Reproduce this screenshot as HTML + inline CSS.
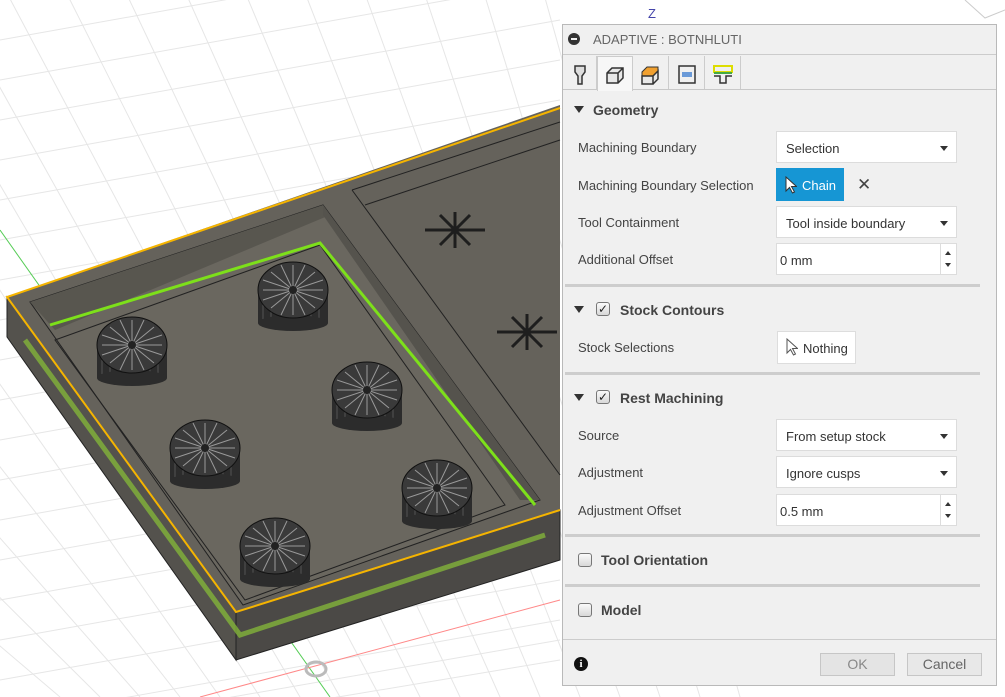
<!DOCTYPE html>
<html><head><meta charset="utf-8"><style>
*{margin:0;padding:0;box-sizing:border-box}
body{width:1005px;height:697px;overflow:hidden;background:#fff;font-family:"Liberation Sans",Arial,sans-serif;position:relative}
#vp{position:absolute;left:0;top:0}
#panel{position:absolute;left:562px;top:24px;width:435px;height:662px;background:#f0f0f0;border:1px solid #b9b9b9}
.t{position:absolute;font-size:13px;color:#444;white-space:nowrap}
.h{position:absolute;font-size:14px;font-weight:bold;color:#444;white-space:nowrap}
.tri{position:absolute;width:0;height:0;border-left:5px solid transparent;border-right:5px solid transparent;border-top:7px solid #333}
.sel{position:absolute;left:213px;width:181px;height:32px;background:#fff;border:1px solid #dcdcdc;font-size:13px;color:#333;padding:9px 0 0 9px}
.sel:after{content:"";position:absolute;right:8px;top:14px;border-left:4px solid transparent;border-right:4px solid transparent;border-top:5px solid #333}
.num{position:absolute;left:213px;width:181px;height:32px;background:#fff;border:1px solid #dcdcdc;font-size:13px;color:#333;padding:9px 0 0 3px}
.spin{position:absolute;right:0;top:0;width:16px;height:30px;border-left:1px solid #ddd}
.spin:before{content:"";position:absolute;left:4px;top:7px;border-left:3px solid transparent;border-right:3px solid transparent;border-bottom:4px solid #333}
.spin:after{content:"";position:absolute;left:4px;top:19px;border-left:3px solid transparent;border-right:3px solid transparent;border-top:4px solid #333}
.sep{position:absolute;left:2px;width:415px;height:3px;background:#cdcdcd}
.cb{position:absolute;width:14px;height:14px;border:1px solid #777;border-radius:3px;background:linear-gradient(#fafafa,#d8d8d8);font-size:12px;line-height:12px;text-align:center;color:#222}
.btn{position:absolute;top:628px;height:23px;border:1px solid #c6c6c6;background:#e4e4e4;font-size:14px;color:#888;text-align:center;line-height:21px}
.tab{position:absolute;top:31px;height:33px;width:36px;border-right:1px solid #ccc}
</style></head><body>
<svg id="vp" width="1005" height="697" viewBox="0 0 1005 697">
<defs>
<g id="fl">
<rect x="-35" y="-5" width="70" height="38" fill="#2c2c2c"/>
<g stroke="#555" stroke-width="1"><path d="M-30 5v30M-22 5v33M-14 5v35M-6 5v36M2 5v36M10 5v35M18 5v33M26 5v30"/></g>
<ellipse cx="0" cy="33" rx="35" ry="8" fill="#2c2c2c"/>
<ellipse cx="0" cy="0" rx="35" ry="28" fill="#3a3a3a" stroke="#111"/>
<g stroke="#999" stroke-width="1"><path d="M-30 0H30M0 -25V25M-22 -18L22 18M22 -18L-22 18M-12 -25L12 25M12 -25L-12 25M-30 -10L30 10M30 -10L-30 10"/></g>
<circle r="4" fill="#222"/>
</g>
</defs>
<g stroke="#e6e6e6" stroke-width="1">
<path d="M0 40 L560 -60 M0 80 L560 -20 M0 120 L560 20 M0 160 L560 60 M0 200 L560 100 M0 240 L560 140 M0 280 L560 180 M0 320 L560 220 M0 360 L560 260 M0 400 L560 300 M0 440 L560 340 M0 480 L560 380 M0 520 L560 420 M0 560 L560 460 M0 600 L560 500 M0 640 L560 540 M0 680 L560 580 M0 720 L560 620 M100 720 L560 640 M200 720 L560 660"/>
<path d="M-200 100 L220 697 M-160 40 L260 697 M-120 -20 L300 697 M-60 -20 L340 697 M0 -20 L380 697 M60 -20 L420 697 M120 -20 L460 697 M180 -20 L500 697 M240 -20 L540 697 M300 -20 L580 697 M360 -20 L620 697 M420 -20 L660 697 M480 -20 L700 697 M540 -20 L740 697 M-240 160 L180 697 M-280 220 L140 697 M-320 280 L100 697 M-360 340 L60 697"/>
</g>
<path d="M0 230 L330 697" stroke="#5c5" stroke-width="1"/>
<path d="M200 697 L560 600" stroke="#f88" stroke-width="1"/>
<polygon points="7,297 7,337 236,660 236,612" fill="#54524d" stroke="#222" stroke-width="1"/>
<polygon points="236,612 560,510 560,560 236,660" fill="#4b4946" stroke="#222" stroke-width="1"/>
<polygon points="7,297 560,105 560,510 236,612" fill="#65625b"/>
<polygon points="30,302 323,205 540,500 243,605" fill="#6a675f" stroke="#222" stroke-width="1"/>
<polygon points="30,302 323,205 330,215 55,330" fill="#58564f"/>
<polygon points="323,205 540,500 520,500 323,215" fill="#55534d"/>
<polygon points="55,340 320,245 505,505 245,600" fill="none" stroke="#222" stroke-width="1"/>
<path d="M352 190 L560 122 M352 190 L560 475 M365 205 L560 140" stroke="#222" stroke-width="1" fill="none"/>
<path d="M50 325 L320 243 L535 505" stroke="#7de01a" stroke-width="3" fill="none"/>
<path d="M25 340 L240 635 L545 535" stroke="#82b43a" stroke-width="5" fill="none" opacity="0.8"/>
<path d="M560 108 L7 297 L236 612 L560 510" stroke="#f5b400" stroke-width="2" fill="none"/>
<use href="#fl" x="132" y="345"/><use href="#fl" x="293" y="290"/><use href="#fl" x="367" y="390"/>
<use href="#fl" x="205" y="448"/><use href="#fl" x="437" y="488"/><use href="#fl" x="275" y="546"/>
<g stroke="#1e1e1e" stroke-width="3" fill="none"><path d="M425 230 H485 M440 215 L470 245 M470 215 L440 245 M455 212 V248"/><path d="M497 332 H557 M512 317 L542 347 M542 317 L512 347 M527 314 V350"/></g>
<ellipse cx="316" cy="669" rx="10" ry="7" fill="none" stroke="#bbb" stroke-width="3"/>
<text x="648" y="18" font-size="13" fill="#44a" font-family="Liberation Sans">Z</text>
<path d="M965 0 L985 18 L1005 10" stroke="#ccc" fill="none"/>
</svg>
<div id="panel">
<div style="position:absolute;left:5px;top:8px;width:12px;height:12px;border-radius:50%;background:#333"></div>
<div style="position:absolute;left:8px;top:13px;width:6px;height:2px;background:#f0f0f0"></div>
<div class="t" style="left:30px;top:7px;color:#666;font-size:13px">ADAPTIVE : BOTNHLUTI</div>
<div style="position:absolute;left:0;top:29px;width:433px;height:1px;background:#ccc"></div>
<div style="position:absolute;left:0;top:64px;width:433px;height:1px;background:#c8c8c8"></div>
<div class="tab" style="left:0;width:34px"><svg width="34" height="33"><path d="M12 10 h10 v6 l-3 4 v8 h-4 v-8 l-3-4z" fill="#ddd" stroke="#333" stroke-width="1.5"/></svg></div>
<div class="tab" style="left:34px;background:#f7f7f7;border:1px solid #ccc;border-bottom:none;height:35px"><svg width="34" height="33"><path d="M9 16 l5-5 h11 v10 l-5 5 h-11z M9 16 h11 v10 M20 16 l5-5" fill="#e8e8e8" stroke="#333" stroke-width="1.5"/></svg></div>
<div class="tab" style="left:70px"><svg width="36" height="33"><path d="M9 16 l5-5 h11 v4 l-5 5 h-11z" fill="#f0a030" stroke="#333" stroke-width="1"/><path d="M9 20 h11 v8 h-11z M20 20 l5-5 v8 l-5 5" fill="#e8e8e8" stroke="#333" stroke-width="1.5"/></svg></div>
<div class="tab" style="left:106px"><svg width="36" height="33"><rect x="10" y="10" width="16" height="17" fill="none" stroke="#333" stroke-width="1.5"/><rect x="13" y="16" width="10" height="5" fill="#6a9ad8"/></svg></div>
<div class="tab" style="left:142px"><svg width="36" height="33"><rect x="9" y="10" width="18" height="6" fill="none" stroke="#dd0" stroke-width="2"/><path d="M9 17 h18" stroke="#4a4" stroke-width="2"/><path d="M9 20 h6 v7 h6 v-7 h6" fill="none" stroke="#333" stroke-width="1.5"/></svg></div>

<div class="tri" style="left:11px;top:81px"></div>
<div class="h" style="left:30px;top:77px">Geometry</div>
<div class="t" style="left:15px;top:115px">Machining Boundary</div>
<div class="sel" style="top:106px">Selection</div>
<div class="t" style="left:15px;top:153px">Machining Boundary Selection</div>
<div style="position:absolute;left:213px;top:143px;width:68px;height:33px;background:#1696d4;color:#fff;font-size:13px;padding:10px 0 0 26px">Chain</div>
<svg style="position:absolute;left:222px;top:151px" width="12" height="18"><path d="M1 1 v14 l3.5-3.5 l3 5.5 l2-1 l-3-5.5 h5z" fill="#fff" stroke="#333" stroke-width="1"/></svg>
<div class="t" style="left:294px;top:150px;font-size:17px;color:#444">✕</div>
<div class="t" style="left:15px;top:190px">Tool Containment</div>
<div class="sel" style="top:181px">Tool inside boundary</div>
<div class="t" style="left:15px;top:227px">Additional Offset</div>
<div class="num" style="top:218px">0 mm<div class="spin"></div></div>
<div class="sep" style="top:259px"></div>
<div class="tri" style="left:11px;top:281px"></div>
<div class="cb" style="left:33px;top:277px">✓</div>
<div class="h" style="left:57px;top:277px">Stock Contours</div>
<div class="t" style="left:15px;top:315px">Stock Selections</div>
<div style="position:absolute;left:214px;top:306px;width:79px;height:33px;background:#fff;border:1px solid #ddd;font-size:13px;color:#333;padding:9px 0 0 25px">Nothing</div>
<svg style="position:absolute;left:223px;top:313px" width="12" height="18"><path d="M1 1 v14 l3.5-3.5 l3 5.5 l2-1 l-3-5.5 h5z" fill="#fff" stroke="#555" stroke-width="1"/></svg>
<div class="sep" style="top:347px"></div>
<div class="tri" style="left:11px;top:369px"></div>
<div class="cb" style="left:33px;top:365px">✓</div>
<div class="h" style="left:57px;top:365px">Rest Machining</div>
<div class="t" style="left:15px;top:403px">Source</div>
<div class="sel" style="top:394px">From setup stock</div>
<div class="t" style="left:15px;top:440px">Adjustment</div>
<div class="sel" style="top:431px">Ignore cusps</div>
<div class="t" style="left:15px;top:478px">Adjustment Offset</div>
<div class="num" style="top:469px">0.5 mm<div class="spin"></div></div>
<div class="sep" style="top:509px"></div>
<div class="cb" style="left:15px;top:528px"></div>
<div class="h" style="left:38px;top:527px">Tool Orientation</div>
<div class="sep" style="top:559px"></div>
<div class="cb" style="left:15px;top:578px"></div>
<div class="h" style="left:38px;top:577px">Model</div>
<div style="position:absolute;left:0;top:614px;width:433px;height:1px;background:#ccc"></div>
<div style="position:absolute;left:11px;top:632px;width:14px;height:14px;border-radius:50%;background:#111;color:#fff;font-size:11px;font-weight:bold;text-align:center;line-height:14px;font-family:'Liberation Serif',serif">i</div>
<div class="btn" style="left:257px;width:75px">OK</div>
<div class="btn" style="left:344px;width:75px;background:#e8e8e8;color:#666">Cancel</div>
</div>
</body></html>
